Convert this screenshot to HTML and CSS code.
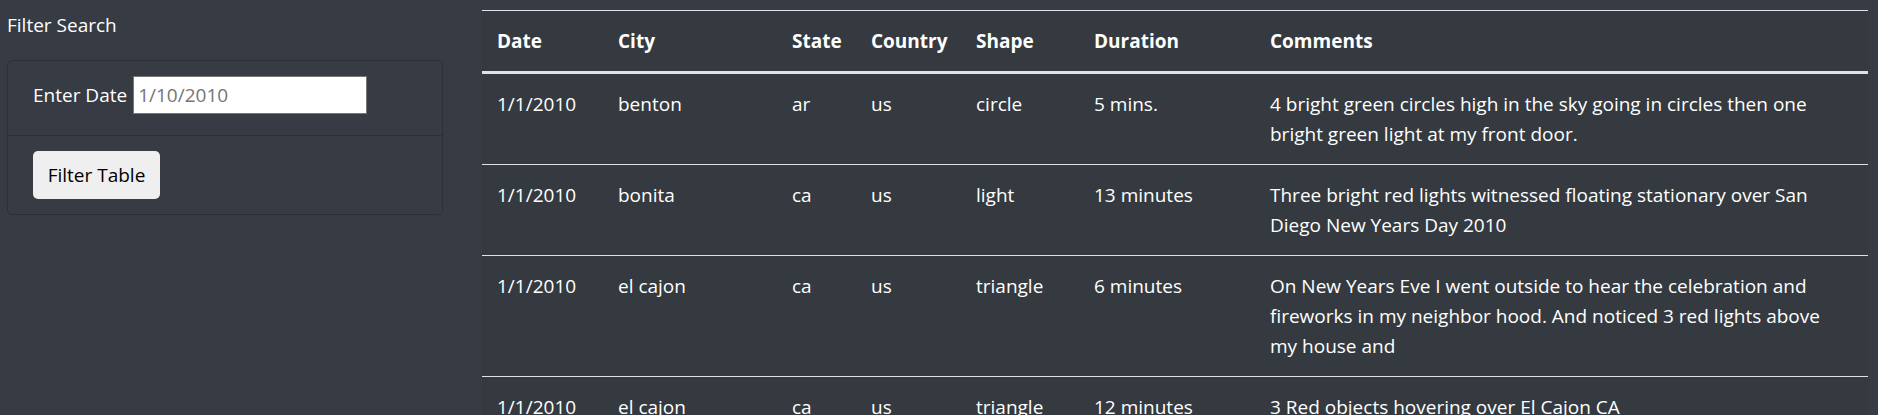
FILE: index.html
```html
<!DOCTYPE html>
<html lang="en">
<head>
<meta charset="utf-8">
<title>UFO Sightings</title>
<link rel="stylesheet" href="styles.css">
</head>
<body>
<div class="layout">
  <aside class="sidebar">
    <h2 class="sidebar-title">Filter Search</h2>
    <div class="card">
      <div class="card-item date-item">
        <label class="date-label" for="datetime">Enter Date</label>
        <input class="date-input" id="datetime" type="text" placeholder="1/10/2010">
      </div>
      <div class="card-item">
        <button class="filter-btn" type="button">Filter Table</button>
      </div>
    </div>
  </aside>
  <main class="table-col">
    <table class="ufo-table">
      <colgroup>
        <col class="c-date"><col class="c-city"><col class="c-state"><col class="c-country"><col class="c-shape"><col class="c-duration"><col class="c-comments">
      </colgroup>
      <thead>
        <tr><th>Date</th><th>City</th><th>State</th><th>Country</th><th>Shape</th><th>Duration</th><th>Comments</th></tr>
      </thead>
      <tbody>
        <tr><td>1/1/2010</td><td>benton</td><td>ar</td><td>us</td><td>circle</td><td>5 mins.</td><td class="comment">4 bright green circles high in the sky going in circles then one bright green light at my front door.</td></tr>
        <tr><td>1/1/2010</td><td>bonita</td><td>ca</td><td>us</td><td>light</td><td>13 minutes</td><td class="comment">Three bright red lights witnessed floating stationary over San Diego New Years Day 2010</td></tr>
        <tr><td>1/1/2010</td><td>el cajon</td><td>ca</td><td>us</td><td>triangle</td><td>6 minutes</td><td class="comment">On New Years Eve I went outside to hear the celebration and fireworks in my neighbor hood. And noticed 3 red lights above my house and</td></tr>
        <tr><td>1/1/2010</td><td>el cajon</td><td>ca</td><td>us</td><td>triangle</td><td>12 minutes</td><td class="comment">3 Red objects hovering over El Cajon CA</td></tr>
      </tbody>
    </table>
  </main>
</div>
</body>
</html>
```
FILE: styles.css
```css
html, body {
  margin: 0;
  padding: 0;
}
body {
  background: #373b43;
  color: #ffffff;
  font-family: "Open Sans", "Noto Sans", sans-serif;
  font-size: 19px;
  line-height: 30px;
  height: 415px;
  overflow: hidden;
}
.layout {
  display: flex;
  align-items: flex-start;
}
.sidebar {
  flex: none;
  width: 436px;
  padding: 10px 0 0 7px;
}
.sidebar-title {
  margin: 0 0 20px;
  font-size: 19px;
  font-weight: 400;
  line-height: 30px;
}
.card {
  border: 1px solid #2d3137;
  border-radius: 5px;
}
.card-item {
  padding: 15px 25px;
}
.card-item + .card-item {
  border-top: 1px solid #2d3137;
}
.date-item {
  display: flex;
  align-items: flex-start;
  gap: 6px;
  padding-bottom: 21px;
}
.date-label {
  line-height: 38px;
}
.date-input {
  box-sizing: border-box;
  width: 234px;
  height: 38px;
  margin: 0;
  padding: 0 4px;
  border: 1px solid #767676;
  background: #ffffff;
  font: inherit;
  color: #333;
}
.date-input::placeholder {
  color: #757575;
}
.filter-btn {
  box-sizing: border-box;
  height: 48px;
  width: 127px;
  padding: 0;
  border: none;
  border-radius: 5px;
  background: #efefef;
  color: #000;
  font: inherit;
}
.table-col {
  flex: none;
  margin-left: 39px;
  padding-top: 10px;
}
.ufo-table {
  width: 1386px;
  table-layout: fixed;
  border-collapse: separate;
  border-spacing: 0;
  background: #343a40;
}
.c-date { width: 121px; }
.c-city { width: 174px; }
.c-state { width: 79px; }
.c-country { width: 105px; }
.c-shape { width: 118px; }
.c-duration { width: 176px; }
.c-comments { width: 613px; }
.ufo-table th,
.ufo-table td {
  padding: 15px;
  text-align: left;
  vertical-align: top;
}
.ufo-table td.comment {
  padding-right: 40px;
}
.ufo-table thead th {
  font-weight: 700;
  border-top: 1px solid #dee2e6;
  border-bottom: 3px solid #dee2e6;
}
.ufo-table tbody td {
  border-top: 1px solid #dee2e6;
}
.ufo-table tbody tr:first-child td {
  border-top: none;
}
```
